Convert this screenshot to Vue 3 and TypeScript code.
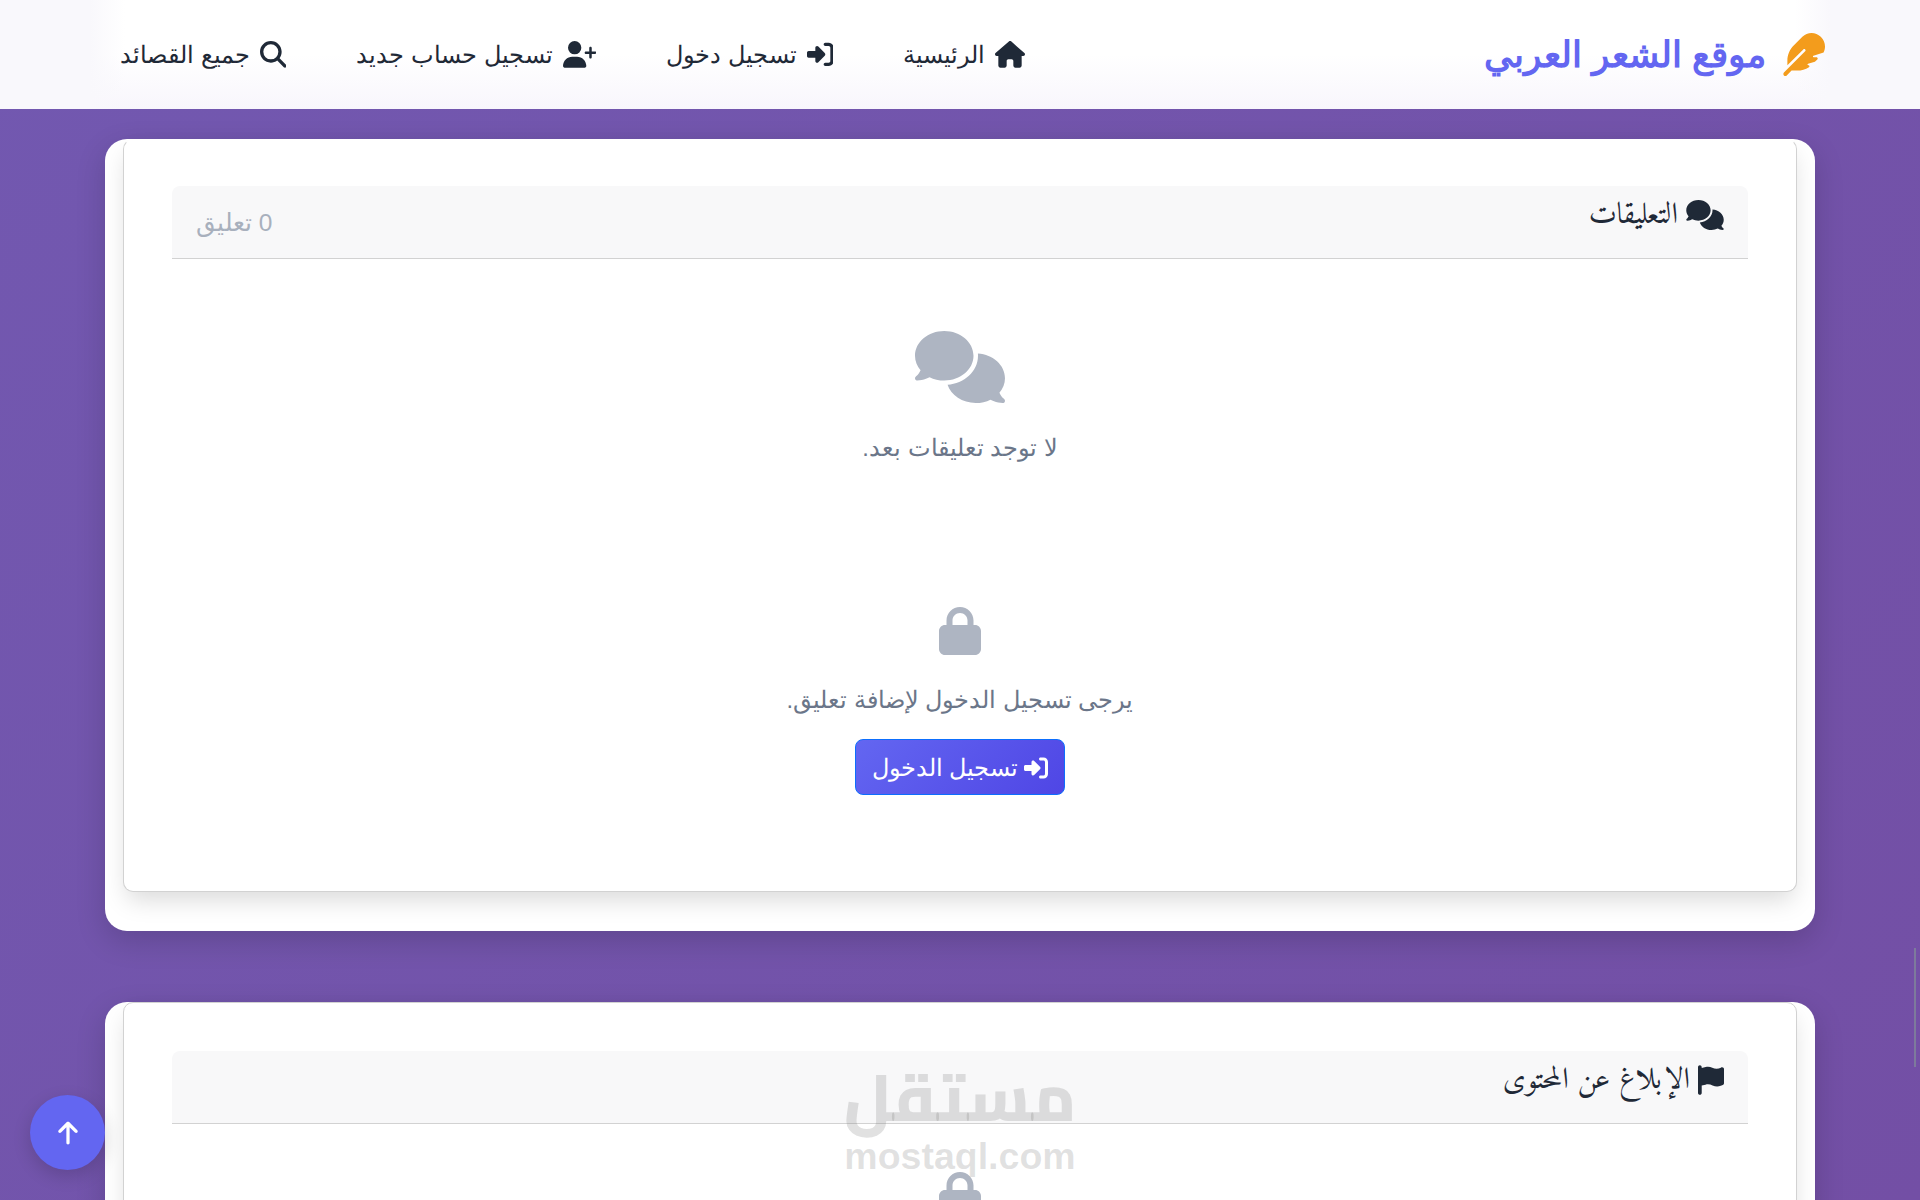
<script setup lang="ts">
// مسارات الأيقونات
const icons = {
  house: 'M575.8 255.5c0 18-15 32.1-32 32.1h-32l.7 160.2c0 2.7-.2 5.4-.5 8.1V472c0 22.1-17.9 40-40 40H456c-1.1 0-2.2 0-3.3-.1c-1.4 .1-2.8 .1-4.2 .1H416 392c-22.1 0-40-17.9-40-40V448 384c0-17.7-14.3-32-32-32H256c-17.7 0-32 14.3-32 32v64 24c0 22.1-17.9 40-40 40H160 128.1c-1.5 0-3-.1-4.5-.2c-1.2 .1-2.4 .2-3.6 .2H104c-22.1 0-40-17.9-40-40V360c0-.9 0-1.9 .1-2.8V287.6H32c-18 0-32-14-32-32.1c0-9 3-17 10-24L266.4 8c7-7 15-8 22-8s15 2 21 7L564.8 231.5c8 7 12 15 11 24z',
  login: 'M217.9 105.9L340.7 228.7c7.2 7.2 11.3 17.1 11.3 27.3s-4.1 20.1-11.3 27.3L217.9 406.1c-6.4 6.4-15 9.9-24 9.9c-18.7 0-33.9-15.2-33.9-33.9l0-62.1L32 320c-17.7 0-32-14.3-32-32l0-64c0-17.7 14.3-32 32-32l128 0 0-62.1c0-18.7 15.2-33.9 33.9-33.9c9 0 17.6 3.6 24 9.9zM352 416l64 0c17.7 0 32-14.3 32-32l0-256c0-17.7-14.3-32-32-32l-64 0c-17.7 0-32-14.3-32-32s14.3-32 32-32l64 0c53 0 96 43 96 96l0 256c0 53-43 96-96 96l-64 0c-17.7 0-32-14.3-32-32s14.3-32 32-32z',
  userPlus: 'M96 128a128 128 0 1 1 256 0A128 128 0 1 1 96 128zM0 482.3C0 383.8 79.8 304 178.3 304h91.4C368.2 304 448 383.8 448 482.3c0 16.4-13.3 29.7-29.7 29.7H29.7C13.3 512 0 498.7 0 482.3zM504 312V248H440c-13.3 0-24-10.7-24-24s10.7-24 24-24h64V136c0-13.3 10.7-24 24-24s24 10.7 24 24v64h64c13.3 0 24 10.7 24 24s-10.7 24-24 24H552v64c0 13.3-10.7 24-24 24s-24-10.7-24-24z',
  search: 'M416 208c0 45.9-14.9 88.3-40 122.7L502.6 457.4c12.5 12.5 12.5 32.8 0 45.3s-32.8 12.5-45.3 0L330.7 376c-34.4 25.2-76.8 40-122.7 40C93.1 416 0 322.9 0 208S93.1 0 208 0S416 93.1 416 208zM208 352a144 144 0 1 0 0-288 144 144 0 1 0 0 288z',
  comments: 'M208 352c114.9 0 208-78.8 208-176S322.9 0 208 0S0 78.8 0 176c0 38.6 14.7 74.3 39.6 103.4c-3.5 9.4-8.7 17.7-14.2 24.7c-4.8 6.2-9.7 11-13.3 14.3c-1.8 1.6-3.3 2.9-4.3 3.7c-.5 .4-.9 .7-1.1 .8l-.2 .2 0 0 0 0C1 327.2-1.4 334.4 .8 340.9S9.1 352 16 352c21.8 0 43.8-5.6 62.1-12.5c9.2-3.5 17.8-7.4 25.3-11.4C134.1 343.3 169.8 352 208 352zM448 176c0 112.3-99.1 196.9-216.5 207C255.8 457.4 336.4 512 432 512c38.2 0 73.9-8.7 104.7-23.9c7.5 4 16 7.9 25.2 11.4c18.3 6.9 40.3 12.5 62.1 12.5c6.9 0 13.1-4.5 15.2-11.1c2.1-6.6-.2-13.8-5.8-17.9l0 0 0 0-.2-.2c-.2-.2-.6-.4-1.1-.8c-1-.8-2.5-2-4.3-3.7c-3.6-3.3-8.5-8.1-13.3-14.3c-5.5-7-10.7-15.4-14.2-24.7c24.9-29 39.6-64.7 39.6-103.4c0-92.8-84.9-168.9-192.6-175.5c.4 5.1 .6 10.3 .6 15.5z',
  lock: 'M144 144v48H304V144c0-44.2-35.8-80-80-80s-80 35.8-80 80zM80 192V144C80 64.5 144.5 0 224 0s144 64.5 144 144v48h16c35.3 0 64 28.7 64 64V448c0 35.3-28.7 64-64 64H64c-35.3 0-64-28.7-64-64V256c0-35.3 28.7-64 64-64H80z',
  flag: 'M64 32C64 14.3 49.7 0 32 0S0 14.3 0 32V64 368 480c0 17.7 14.3 32 32 32s32-14.3 32-32V352l64.3-16.1c41.1-10.3 84.6-5.5 122.5 13.4c44.2 22.1 95.5 24.8 141.7 7.4l34.7-13c12.5-4.7 20.8-16.6 20.8-30V66.1c0-23-24.2-38-44.8-27.7l-9.6 4.8c-46.3 23.2-100.8 23.2-147.1 0c-35.1-17.6-75.4-22-113.5-12.5L64 48V32z',
  feather: 'M278.5 215.6L23 471c-9.4 9.4-9.4 24.6 0 33.9s24.6 9.4 33.9 0l57-57h68c49.7 0 97.9-14.4 139-41c11.1-7.2 5.5-23-7.8-23c-5.1 0-9.2-4.1-9.2-9.2c0-4.1 2.7-7.6 6.5-8.8l81-24.3c2.5-.8 4.8-2.1 6.7-4l22.4-22.4c10.1-10.1 2.9-27.3-11.3-27.3l-32.2 0c-5.1 0-9.2-4.1-9.2-9.2c0-4.1 2.7-7.6 6.5-8.8l112-33.6c4-1.2 7.4-3.9 9.3-7.7C506.4 207.6 512 184.1 512 160c0-41-16.3-80.3-45.3-109.3l-5.5-5.5C432.3 16.3 393 0 352 0s-80.3 16.3-109.3 45.3L139 149C91 197 64 262.1 64 330v55.3L253.6 195.8c6.2-6.2 16.4-6.2 22.6 0c5.4 5.4 6.1 13.6 2.2 19.8z',
  arrowUp: 'M214.6 41.4c-12.5-12.5-32.8-12.5-45.3 0l-160 160c-12.5 12.5-12.5 32.8 0 45.3s32.8 12.5 45.3 0L160 141.2V448c0 17.7 14.3 32 32 32s32-14.3 32-32V141.2L329.4 246.6c12.5 12.5 32.8 12.5 45.3 0s12.5-32.8 0-45.3l-160-160z',
}

const navLinks = [
  { label: 'الرئيسية', path: icons.house, box: '0 0 576 512', w: 30 },
  { label: 'تسجيل دخول', path: icons.login, box: '0 0 512 512', w: 26.67 },
  { label: 'تسجيل حساب جديد', path: icons.userPlus, box: '0 0 640 512', w: 33.33 },
  { label: 'جميع القصائد', path: icons.search, box: '0 0 512 512', w: 26.67 },
]
</script>

<template>
  <div class="page" dir="rtl">
    <header class="navbar">
      <a class="brand">
        <svg class="brand-icon" viewBox="0 0 512 512"><path :d="icons.feather" /></svg>
        <span>موقع الشعر العربي</span>
      </a>
      <nav class="nav-links">
        <a v-for="link in navLinks" :key="link.label" class="nav-link">
          <svg :viewBox="link.box" :style="{ width: link.w + 'px' }"><path :d="link.path" /></svg>
          <span>{{ link.label }}</span>
        </a>
      </nav>
    </header>

    <main class="content">
      <section class="outer-card">
        <div class="inner-card inner-card--first">
          <div class="section-head">
            <h3 class="section-title">
              <svg class="title-icon title-icon--comments" viewBox="0 0 640 512"><path :d="icons.comments" /></svg>
              التعليقات
            </h3>
            <span class="count">0 تعليق</span>
          </div>
          <div class="empty">
            <svg class="empty-comments" viewBox="0 0 640 512"><path :d="icons.comments" /></svg>
            <p class="muted">لا توجد تعليقات بعد.</p>
          </div>
          <div class="login-prompt">
            <svg class="lock" viewBox="0 0 448 512"><path :d="icons.lock" /></svg>
            <p class="muted">يرجى تسجيل الدخول لإضافة تعليق.</p>
            <button type="button" class="login-btn">
              <svg viewBox="0 0 512 512"><path :d="icons.login" /></svg>
              تسجيل الدخول
            </button>
          </div>
        </div>
      </section>

      <section class="outer-card">
        <div class="inner-card">
          <div class="section-head">
            <h3 class="section-title">
              <svg class="title-icon title-icon--flag" viewBox="0 0 448 512"><path :d="icons.flag" /></svg>
              الإبلاغ عن المحتوى
            </h3>
          </div>
          <div class="report-body">
            <svg class="lock" viewBox="0 0 448 512"><path :d="icons.lock" /></svg>
          </div>
        </div>
      </section>
    </main>

    <button type="button" class="to-top" aria-label="top">
      <svg viewBox="0 0 384 512"><path :d="icons.arrowUp" /></svg>
    </button>

    <div class="scroll-thumb"></div>

    <div class="watermark">
      <span class="wm-ar">مستقل</span>
      <span class="wm-en">mostaql.com</span>
    </div>
  </div>
</template>

<style scoped>
.page {
  position: relative;
  width: 1920px;
  height: 1200px;
  overflow: hidden;
  background: linear-gradient(135deg, #7258b0 0%, #734fa5 100%);
  font-family: "Segoe UI", sans-serif;
  color: #1f2937;
}

.navbar {
  box-sizing: border-box;
  height: 109px;
  display: flex;
  align-items: center;
  justify-content: space-between;
  padding: 0 95px 0 120px;
  background:
    linear-gradient(to right, #f9f8fc 90px, transparent 125px, transparent 1795px, #f9f8fc 1830px),
    linear-gradient(to bottom, #fff 50%, #f8f6fc 100%);
}

.brand {
  display: flex;
  align-items: center;
  gap: 16px;
  font-size: 36px;
  font-weight: 700;
  color: #6366f1;
}

.brand-icon {
  width: 43px;
  height: 43px;
  fill: #f39c1c;
}

.nav-links {
  display: flex;
  align-items: center;
  gap: 70px;
}

.nav-link {
  display: flex;
  align-items: center;
  gap: 10px;
  font-size: 24px;
  color: #1f2937;
}

.nav-link svg {
  height: 26.67px;
  fill: #1f2937;
}

.content {
  padding-top: 30px;
  display: flex;
  flex-direction: column;
  gap: 71px;
  align-items: center;
}

.outer-card {
  box-sizing: border-box;
  width: 1710px;
  padding: 0 18px 39px;
  background: #fff;
  border-radius: 22px;
  box-shadow: 0 10px 30px rgba(0, 0, 0, 0.16);
}

.inner-card {
  box-sizing: border-box;
  padding: 48px 48px 96px;
  background: #fff;
  border: 1px solid #d2d2d2;
  border-radius: 10px;
  box-shadow: 0 12px 24px -4px rgba(0, 0, 0, 0.15);
}

.inner-card--first {
  padding-top: 46px;
  border-top-color: transparent;
}

.section-head {
  box-sizing: border-box;
  height: 73px;
  display: flex;
  justify-content: space-between;
  padding: 0 24px;
  background: #f8f8f9;
  border-bottom: 1px solid #d2d2d2;
  border-radius: 8px 8px 0 0;
}

.section-title {
  margin: 11px 0 0;
  display: flex;
  align-items: center;
  gap: 8px;
  height: 36px;
  font-family: "Amiri", serif;
  font-size: 30px;
  font-weight: 400;
  color: #1f2937;
}

.title-icon {
  fill: #1f2937;
  height: 30px;
}

.title-icon--comments {
  width: 38px;
}

.title-icon--flag {
  width: 26px;
}

.count {
  margin-top: 23px;
  font-size: 24.5px;
  line-height: 28px;
  color: #a8b0bd;
}

.empty {
  padding-top: 72px;
  display: flex;
  flex-direction: column;
  align-items: center;
}

.empty-comments {
  width: 90px;
  height: 72px;
  fill: #aeb5c2;
}

.muted {
  margin: 0;
  font-size: 23.7px;
  line-height: 30px;
  color: #6b7689;
}

.empty .muted {
  margin-top: 30px;
}

.login-prompt {
  padding-top: 144px;
  display: flex;
  flex-direction: column;
  align-items: center;
}

.login-prompt .muted {
  margin-top: 30px;
}

.lock {
  width: 42px;
  height: 48px;
  fill: #aeb5c2;
}

.login-btn {
  box-sizing: border-box;
  width: 210px;
  height: 56px;
  margin-top: 24px;
  padding: 2px 0 0;
  display: flex;
  align-items: center;
  justify-content: center;
  gap: 6px;
  background: linear-gradient(135deg, #6366f1, #4f46e5);
  border: 1px solid #0d6efd;
  border-radius: 8px;
  font-family: inherit;
  font-size: 23.5px;
  color: #fff;
}

.login-btn svg {
  width: 24px;
  height: 24px;
  fill: #fff;
}

.report-body {
  padding-top: 48px;
  display: flex;
  justify-content: center;
}

.to-top {
  position: absolute;
  left: 30px;
  top: 1095px;
  width: 75px;
  height: 75px;
  padding: 0;
  display: flex;
  align-items: center;
  justify-content: center;
  border: none;
  border-radius: 50%;
  background: #6366f1;
  box-shadow: 0 6px 18px rgba(0, 0, 0, 0.16);
}

.to-top svg {
  width: 20px;
  height: 26px;
  fill: #fff;
}

.scroll-thumb {
  position: absolute;
  left: 1914px;
  top: 948px;
  width: 2px;
  height: 119px;
  background: #7d7a9c;
}

.watermark {
  position: absolute;
  left: 845px;
  top: 1058px;
  width: 230px;
  display: flex;
  flex-direction: column;
  align-items: center;
  pointer-events: none;
  color: rgba(120, 120, 120, 0.22);
}

.wm-ar {
  font-family: "Cairo", sans-serif;
  font-weight: 800;
  font-size: 66px;
  line-height: 78px;
}

.wm-en {
  font-family: "Liberation Sans", sans-serif;
  font-weight: 700;
  font-size: 37.5px;
  line-height: 40px;
}
</style>
